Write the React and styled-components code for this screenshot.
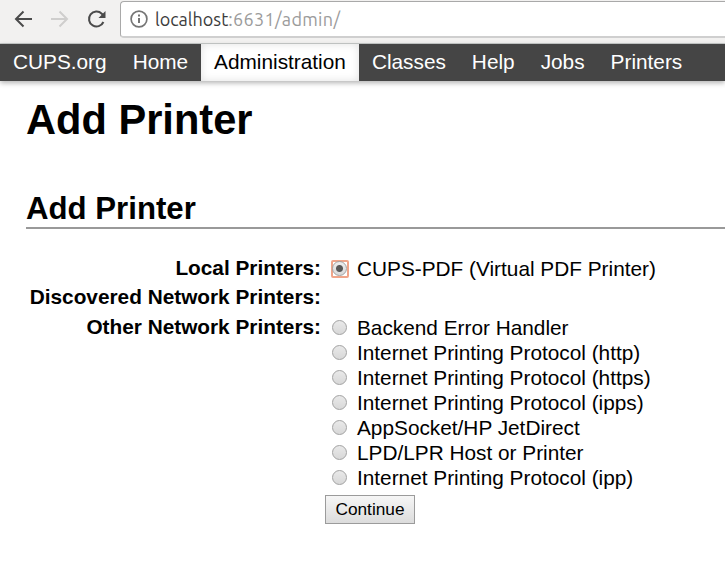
import React from "react";
import styled, { createGlobalStyle } from "styled-components";

const GlobalStyle = createGlobalStyle`
  * { box-sizing: border-box; }
  body {
    margin: 0;
    background: #fff;
    color: #000;
    font-family: "Liberation Sans", Arial, sans-serif;
    font-size: 20.8px;
    overflow: hidden;
  }
`;

const Toolbar = styled.div`
  height: 44px;
  display: flex;
  align-items: flex-start;
  padding: 1px 0 0 10px;
  background: #f2f1f0;
  border-bottom: 1px solid #c9cccb;
`;

const ToolIcon = styled.svg`
  flex: none;
  width: 24px;
  height: 24px;
  margin: 6px 13px 0 0;
  fill: none;
  stroke: ${(p) => (p.$faded ? "#cfcecd" : "#4b4b4b")};
  stroke-width: 2;
`;

const AddressBar = styled.div`
  flex: 1;
  height: 37px;
  margin-left: -1px;
  display: flex;
  align-items: center;
  padding-left: 8px;
  background: #fff;
  border: 1px solid #a9a9a9;
  border-bottom: 2px solid #cfcfcf;
  border-right: 0;
  border-radius: 4px 0 0 4px;
`;

const InfoIcon = styled.svg`
  flex: none;
  width: 20px;
  height: 20px;
  margin-right: 6px;
`;

const Url = styled.span`
  font: 18px/24px Ubuntu, "Noto Sans", sans-serif;
  letter-spacing: 0.33px;
  color: #9b9b9b;
  white-space: nowrap;
`;

const Host = styled.span`
  color: #3c3c3c;
  letter-spacing: 0;
`;

const Nav = styled.nav`
  display: flex;
  height: 37px;
  background: #454545;
  box-shadow: 0 2px 5px rgba(0, 0, 0, 0.3);
`;

const NavItem = styled.a`
  padding: 0 13px;
  line-height: 36px;
  color: ${(p) => (p.$active ? "#000" : "#fff")};
  background: ${(p) => (p.$active ? "#fff" : "transparent")};
  box-shadow: ${(p) => (p.$active ? "inset 0 0 8px rgba(0,0,0,0.12)" : "none")};
`;

const Content = styled.main`
  padding: 15px 0 0 26px;
`;

const Title = styled.h1`
  margin: 0;
  font-size: 41.6px;
  line-height: 48px;
`;

const Subtitle = styled.h2`
  margin: 46px 0 0;
  height: 39px;
  font-size: 31.2px;
  line-height: 38px;
  border-bottom: 2px solid #999;
`;

const Form = styled.form`
  display: grid;
  grid-template-columns: 295px 1fr;
  column-gap: 4px;
  margin-top: 27px;
`;

const Label = styled.div`
  min-height: ${(p) => p.$height}px;
  font-weight: bold;
  line-height: 24px;
  text-align: right;
`;

const Options = styled.div`
  padding: 0 0 0 6px;
`;

const Option = styled.label`
  display: flex;
  align-items: center;
  height: 25px;
  line-height: 24px;
  white-space: nowrap;
`;

const Focus = styled.span`
  display: flex;
  align-items: center;
  flex: none;
  width: 18px;
  height: 18px;
  margin-right: 8px;
  border-radius: 2px;
  border: 2px solid ${(p) => (p.$focused ? "#f0a58a" : "transparent")};
`;

const Radio = styled.input`
  appearance: none;
  flex: none;
  width: 15px;
  height: 15px;
  margin: 0 0 0 -1px;
  border: 1px solid #a2a2a2;
  border-radius: 50%;
  outline: none;
  background: linear-gradient(#e9e9e9, #d8d8d8);
  &:checked {
    background: radial-gradient(circle, #585858 0 3px, transparent 4px),
      linear-gradient(#eee, #d8d8d8);
  }
`;

const Submit = styled.button`
  justify-self: start;
  grid-column: 2;
  width: 90px;
  height: 29px;
  margin-top: 5px;
  padding: 0;
  color: #000;
  font: 17.3px "Liberation Sans", Arial, sans-serif;
  border: 1px solid #9b9b9b;
  border-radius: 0;
  background: linear-gradient(#f6f6f6, #dcdcdc);
`;

const links = ["CUPS.org", "Home", "Administration", "Classes", "Help", "Jobs", "Printers"];

const networkPrinters = [
  "Backend Error Handler",
  "Internet Printing Protocol (http)",
  "Internet Printing Protocol (https)",
  "Internet Printing Protocol (ipps)",
  "AppSocket/HP JetDirect",
  "LPD/LPR Host or Printer",
  "Internet Printing Protocol (ipp)",
];

function PrinterOption({ name, selected }) {
  return (
    <Option>
      <Focus $focused={selected}>
        <Radio type="radio" name="device" defaultChecked={selected} />
      </Focus>
      {name}
    </Option>
  );
}

export default function App() {
  return (
    <>
      <GlobalStyle />
      <Toolbar>
        <ToolIcon viewBox="0 0 24 24">
          <path d="M22 12H6M13.5 4.5 6 12l7.5 7.5" />
        </ToolIcon>
        <ToolIcon viewBox="0 0 24 24" $faded>
          <path d="M4 12h16M12.5 4.5 20 12l-7.5 7.5" />
        </ToolIcon>
        <ToolIcon viewBox="0 0 24 24">
          <path d="M19.4 15A7.5 7.5 0 1 1 17.8 6.7L20 9" />
          <path d="M21.5 4v7h-7z" fill="#4b4b4b" stroke="none" />
        </ToolIcon>
        <AddressBar>
          <InfoIcon viewBox="0 0 20 20">
            <circle cx="10" cy="10" r="7.9" fill="none" stroke="#757575" strokeWidth="1.7" />
            <path d="M10 9v5M10 5.6v2" stroke="#757575" strokeWidth="2" />
          </InfoIcon>
          <Url>
            <Host>localhost</Host>:6631/admin/
          </Url>
        </AddressBar>
      </Toolbar>
      <Nav>
        {links.map((name) => (
          <NavItem key={name} $active={name === "Administration"}>{name}</NavItem>
        ))}
      </Nav>
      <Content>
        <Title>Add Printer</Title>
        <Subtitle>Add Printer</Subtitle>
        <Form>
          <Label $height={29}>Local Printers:</Label>
          <Options><PrinterOption name="CUPS-PDF (Virtual PDF Printer)" selected /></Options>
          <Label $height={30}>Discovered Network Printers:</Label>
          <Options />
          <Label $height={30}>Other Network Printers:</Label>
          <Options>
            {networkPrinters.map((name) => <PrinterOption key={name} name={name} />)}
          </Options>
          <Submit type="button">Continue</Submit>
        </Form>
      </Content>
    </>
  );
}
